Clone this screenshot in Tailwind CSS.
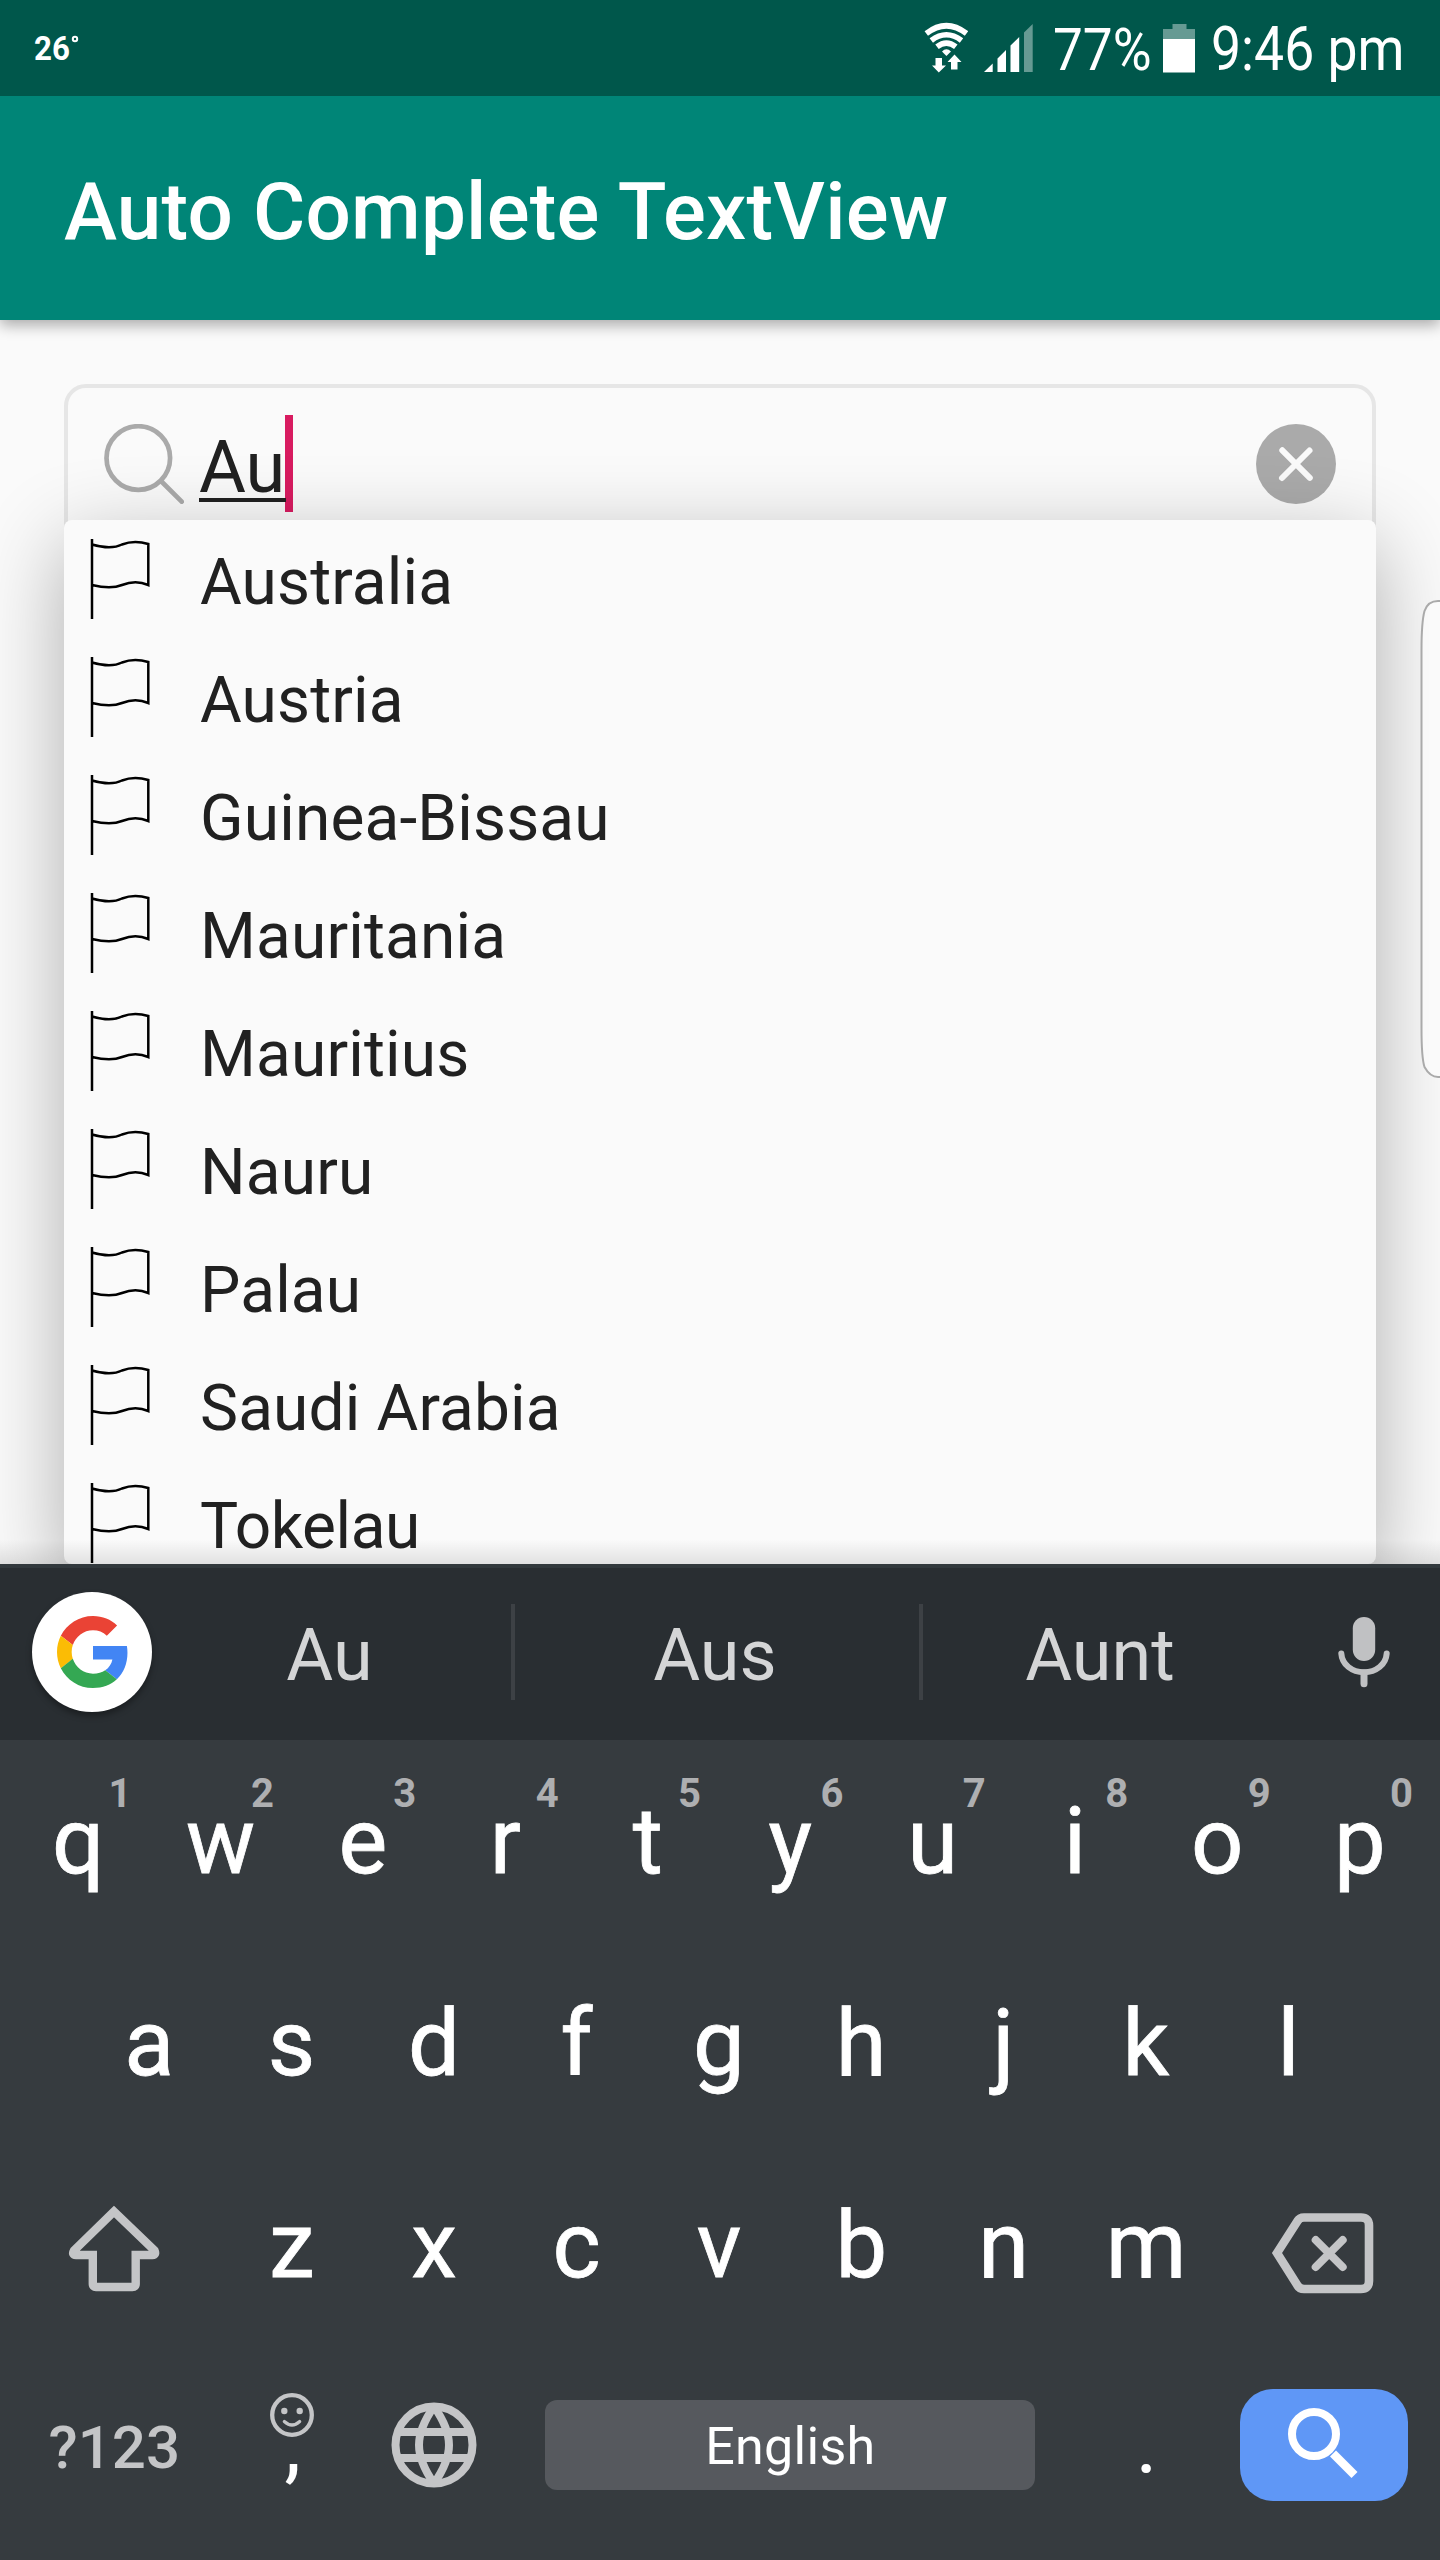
<!DOCTYPE html>
<html lang="en">
<head>
<meta charset="utf-8">
<title>Auto Complete TextView</title>
<script src="https://cdn.jsdelivr.net/npm/@tailwindcss/browser@4"></script>
</head>
<body class="w-[1440px] h-[2560px] overflow-hidden bg-[#fafafa] font-[Roboto,sans-serif] flex flex-col">

<!-- Status bar -->
<header class="h-24 shrink-0 bg-[#00574b] text-white flex items-center relative z-10">
  <div class="ml-[34px] w-[37px] flex text-[34px] leading-none font-bold"><span class="inline-block origin-left scale-x-[.92]">26</span></div>
  <svg class="w-2 h-6 -mt-0.5" viewBox="0 0 8 24" fill="none" stroke="#fff" stroke-width="2"><circle cx="4" cy="4" r="2.200"/></svg>
  <svg class="ml-[845px] w-[44px] h-[52px]" viewBox="924 21 44 52" fill="none" stroke="#fff" stroke-width="5.6">
    <path d="M926.3 32.5Q946.4 17 966.5 32.5"/><path d="M931.3 39.5Q946.4 28 961.5 39.5"/><path d="M937 45.8Q946.4 38.5 955.8 45.8"/>
    <g fill="#fff" stroke="none"><path d="M942 50.5Q946.4 46 951 50.5L946.4 55Z"/><path d="M935.5 57h6.5v7.5h4L938.8 71.5 932 64.500h3.500zM951 68.500h6.500V61h4L954.500 53.500 947.500 61h3.500z"/></g>
  </svg>
  <svg class="ml-4 w-[50px] h-[50px]" viewBox="984 22 50 50" fill="#fff"><path d="M984 71l8.700-8.500V71zM997.500 57.500l8.500-8.500V71h-8.500zM1010.500 44.500l8.700-8.500V71h-8.700z"/><path fill="#669a93" d="M1024 31.500l8.700-8.500V71H1024z"/></svg>
  <div class="ml-[19px] w-[103px] pt-1 text-[60px] leading-none"><span class="inline-block origin-left scale-x-[.885]">77%</span></div>
  <svg class="ml-[7px] w-8 h-[50px]" viewBox="0 0 32 50"><path fill="#669a93" d="M9.500 1h14v5H32v10H0V6h9.500z"/><path fill="#fff" d="M0 16h32v33.500H0z"/></svg>
  <div class="ml-4 w-[200px] pt-1 text-[60.500px] leading-none whitespace-nowrap"><span class="inline-block origin-left scale-x-[.885]">9:46 pm</span></div>
</header>

<!-- App bar -->
<div class="h-[224px] shrink-0 bg-[#008577] text-white flex items-center pl-16 pt-[7px] shadow-[0_5px_14px_rgba(0,0,0,.33)] relative">
  <h1 class="text-[80px] leading-none font-medium tracking-[.19px]">Auto Complete TextView</h1>
</div>

<!-- Content -->
<main class="h-[1244px] shrink-0 px-16 pt-16 relative overflow-hidden">
  <div class="h-[164px] rounded-[22px] border-4 border-[#e6e6e6] flex items-start pl-[36px] pr-[36px] pt-9">
    <svg class="w-[80px] h-[80px]" viewBox="104 424 80 80" fill="none" stroke="#aaa" stroke-width="4.700"><circle cx="138.300" cy="458" r="31.800"/><path stroke-linecap="round" d="M161.500 481.500L181.700 501.700"/></svg>
    <div class="ml-[15px] -mt-[9px] h-[97px] flex items-center">
      <div class="w-[87px] pt-[9px] relative text-[72px] leading-[80px] text-[#212121]">Au<span class="absolute left-0 bottom-[6px] w-full h-1 bg-[#212121]"></span></div>
      <div class="w-2 h-[97px] bg-[#d81b60] -ml-px"></div>
    </div>
    <svg class="ml-auto w-20 h-20" viewBox="0 0 80 80"><circle cx="40" cy="40" r="40" fill="#aaa"/><path d="M26.300 26.300l27.500 27.500M53.500 26.500L26 54" stroke="#fafafa" stroke-width="6" stroke-linecap="round"/></svg>
  </div>

  <!-- Suggestion popup -->
  <ul id="list" class="absolute left-16 top-[200px] w-[1312px] h-[1044px] rounded-lg bg-[#fafafa] overflow-hidden shadow-[0_24px_84px_rgba(0,0,0,.31)]"></ul>

  <!-- Edge panel handle -->
  <svg class="absolute right-0 top-[279px] w-5 h-[480px]" viewBox="1420 599 20 480"><path d="M1442 601H1438Q1428 601 1424.500 611Q1421.500 622 1421.500 650V1028Q1421.500 1058 1424.500 1067Q1430 1077 1438 1077H1442" fill="#fafafa" fill-opacity=".85" stroke="#aaa" stroke-width="2"/></svg>
  <div class="absolute left-0 bottom-0 w-full h-6 bg-linear-to-t from-black/10 to-transparent"></div>
</main>

<!-- Keyboard -->
<section class="h-[996px] shrink-0 bg-[#363b3f] text-white">
  <div class="h-[176px] border-t-4 border-[#32393d] bg-[#292e32] flex items-center text-[72px] leading-none text-[#d4d5d6]">
    <div class="ml-8 w-[120px] h-[120px] -mt-1 rounded-full bg-white flex items-center justify-center shadow-[0_4px_6px_rgba(0,0,0,.35)]">
      <svg class="w-[72px] h-[72px] ml-[2px]" viewBox="0 0 48 48"><path fill="#EA4335" d="M24 9.500c3.540 0 6.710 1.220 9.210 3.600l6.850-6.850C35.900 2.380 30.470 0 24 0 14.620 0 6.510 5.380 2.560 13.220l7.980 6.190C12.430 13.720 17.740 9.500 24 9.500z"/><path fill="#4285F4" d="M46.980 24.550c0-1.570-.15-3.090-.38-4.550H24v9.020h12.940c-.58 2.960-2.260 5.480-4.780 7.180l7.730 6c4.510-4.180 7.090-10.360 7.090-17.650z"/><path fill="#FBBC05" d="M10.530 28.590c-.48-1.450-.76-2.990-.76-4.590s.27-3.140.76-4.590l-7.980-6.190C.92 16.460 0 20.120 0 24c0 3.880.92 7.540 2.560 10.780l7.970-6.190z"/><path fill="#34A853" d="M24 48c6.480 0 11.930-2.130 15.890-5.810l-7.730-6c-2.150 1.450-4.920 2.300-8.160 2.300-6.260 0-11.570-4.220-13.470-9.910l-7.980 6.190C6.510 42.620 14.620 48 24 48z"/></svg>
    </div>
    <div class="-ml-[4px] w-[363px] text-center pt-1">Au</div>
    <div class="w-1 h-24 -mt-1 bg-[#3d4145]"></div>
    <div class="w-[404px] text-center pt-1 pr-1">Aus</div>
    <div class="w-1 h-24 -mt-1 bg-[#3d4145]"></div>
    <div class="w-[354px] text-center pt-1">Aunt</div>
    <svg class="ml-[61px] -mt-1 w-[52px] h-[72px]" viewBox="1336 1615 52 72" fill="none" stroke="#c0c1c3" stroke-linecap="round"><rect x="1350.800" y="1616" width="22.400" height="44" rx="11.200" fill="#c0c1c3" stroke="none"/><path stroke-width="6" d="M1339.300 1652.500C1340 1663.500 1350 1671.300 1362 1671.300S1384 1663.500 1384.700 1652.500"/><path stroke-width="7" d="M1362 1672V1682.800"/></svg>
  </div>

  <div id="row1" class="h-[202px] pl-[7px] flex"></div>
  <div id="row2" class="h-[202px] pl-[78px] flex"></div>
  <div class="h-[202px] pl-[7px] flex items-center">
    <div class="w-[213.600px] flex justify-center">
      <svg class="w-[92px] h-[90px] mt-[7px]" viewBox="68 2204 92 90" fill="none" stroke="#c4c5c7" stroke-width="8.400"><path d="M114 2211.500L74 2250.500Q71.500 2255 76 2255H92.800V2284Q92.800 2287 96 2287H132.500Q135.700 2287 135.700 2284V2255H152.500Q156.500 2255 154.500 2250.500Z"/></svg>
    </div>
    <div id="row3" class="h-full w-[996.800px] flex"></div>
    <div class="w-[213.600px] flex justify-center pr-[2px]">
      <svg class="w-[104px] h-[82px] mt-[15px]" viewBox="1271 2212 104 82" fill="none" stroke="#c4c5c7" stroke-width="8.600"><path d="M1277 2253L1297.500 2221Q1299.500 2217.500 1304 2217.500H1361Q1369 2217.500 1369 2225.500V2281Q1369 2289 1361 2289H1304Q1299.500 2289 1297.500 2285.500Z"/><path stroke-linecap="round" stroke-width="8" d="M1315.700 2240L1342.700 2267M1342.700 2240L1315.700 2267"/></svg>
    </div>
  </div>
  <div class="h-[200px] pl-[7px] flex items-center">
    <div class="w-[213.600px] text-center text-[60px] leading-none font-medium text-[#c4c5c7] pt-[3px] pl-px">?123</div>
    <div class="w-[142.400px] h-full relative flex items-center justify-center text-[84px] leading-none pb-0.5 pl-0.5">
      <svg class="absolute left-[49px] top-[47px] w-11 h-11" viewBox="0 0 44 44" fill="none" stroke="#c4c5c7"><circle cx="22" cy="22" r="19.800" stroke-width="4.300"/><g fill="#c4c5c7" stroke="none"><circle cx="14.300" cy="18" r="3.200"/><circle cx="29.700" cy="18" r="3.200"/></g><path stroke-width="3.200" stroke-linecap="round" d="M14.300 28.500Q22 35.500 29.700 28.500"/></svg>
      ,
    </div>
    <div class="w-[142.400px] flex justify-center">
      <svg class="w-[86px] h-[86px] -mt-0.5" viewBox="-43 -43 86 86" fill="none" stroke="#c4c5c7" stroke-width="8"><circle r="38.500"/><path d="M-37-13H37M-37 13H37M0-38.500Q-15-17-15 0T0 38.500M0-38.500Q15-17 15 0T0 38.500"/></svg>
    </div>
    <div class="ml-[40px] w-[490px] h-[90px] -mt-0.5 rounded-xl bg-[#56595e] flex items-center justify-center text-[52px] leading-none pt-1"><span class="tracking-[.3px]">English</span></div>
    <div class="ml-[40px] w-[142.400px] text-center text-[84px] leading-none pb-0.5">.</div>
    <div class="ml-[22px] w-[168px] h-[112px] -mt-0.5 rounded-[33px] bg-[#5f97f6] flex items-center justify-center">
      <svg class="w-[72px] h-[72px] mr-[2px] -mt-1" viewBox="1287 2408 72 72" fill="none" stroke="#fff" stroke-width="8"><circle cx="1314" cy="2435" r="22"/><path stroke-width="8.500" d="M1333 2454.500L1354.500 2476"/></svg>
    </div>
  </div>
</section>

<script>
  const countries = ["Australia", "Austria", "Guinea-Bissau", "Mauritania", "Mauritius", "Nauru", "Palau", "Saudi Arabia", "Tokelau"];
  document.getElementById("list").innerHTML = countries.map(name => `
    <li class="h-[118px] pl-6 flex items-center text-[64px] leading-none text-[#212121]">
      <svg class="w-[64px] h-[82px]" viewBox="88 538 64 82" fill="none" stroke="#000" stroke-width="2.500"><path d="M92 539V619M92 544.500C104 548 115 548 122 544.500C131 541 140 541.500 148.300 544V585C140 581.500 131 581.500 122 585C115 588 104 588 92 585"/></svg>
      <span class="ml-12 pt-2 ${name[0] === "T" ? "tracking-[-.45px]" : "tracking-[.15px]"}">${name}</span>
    </li>`).join("");
  const key = (c, hint) => `
    <div class="relative w-[142.400px] flex items-center justify-center pt-0.5 text-[92px] leading-none"><span class="[-webkit-text-stroke:0.8px_white]">${c}</span>${hint ? `<span class="absolute left-[93px] top-[34px] w-10 text-center text-[40px] leading-none font-bold text-[#aeafb1]">${hint}</span>` : ""}</div>`;
  document.getElementById("row1").innerHTML = [..."qwertyuiop"].map((c, i) => key(c, "1234567890"[i])).join("");
  document.getElementById("row2").innerHTML = [..."asdfghjkl"].map(c => key(c)).join("");
  document.getElementById("row3").innerHTML = [..."zxcvbnm"].map(c => key(c)).join("");
</script>
</body>
</html>
